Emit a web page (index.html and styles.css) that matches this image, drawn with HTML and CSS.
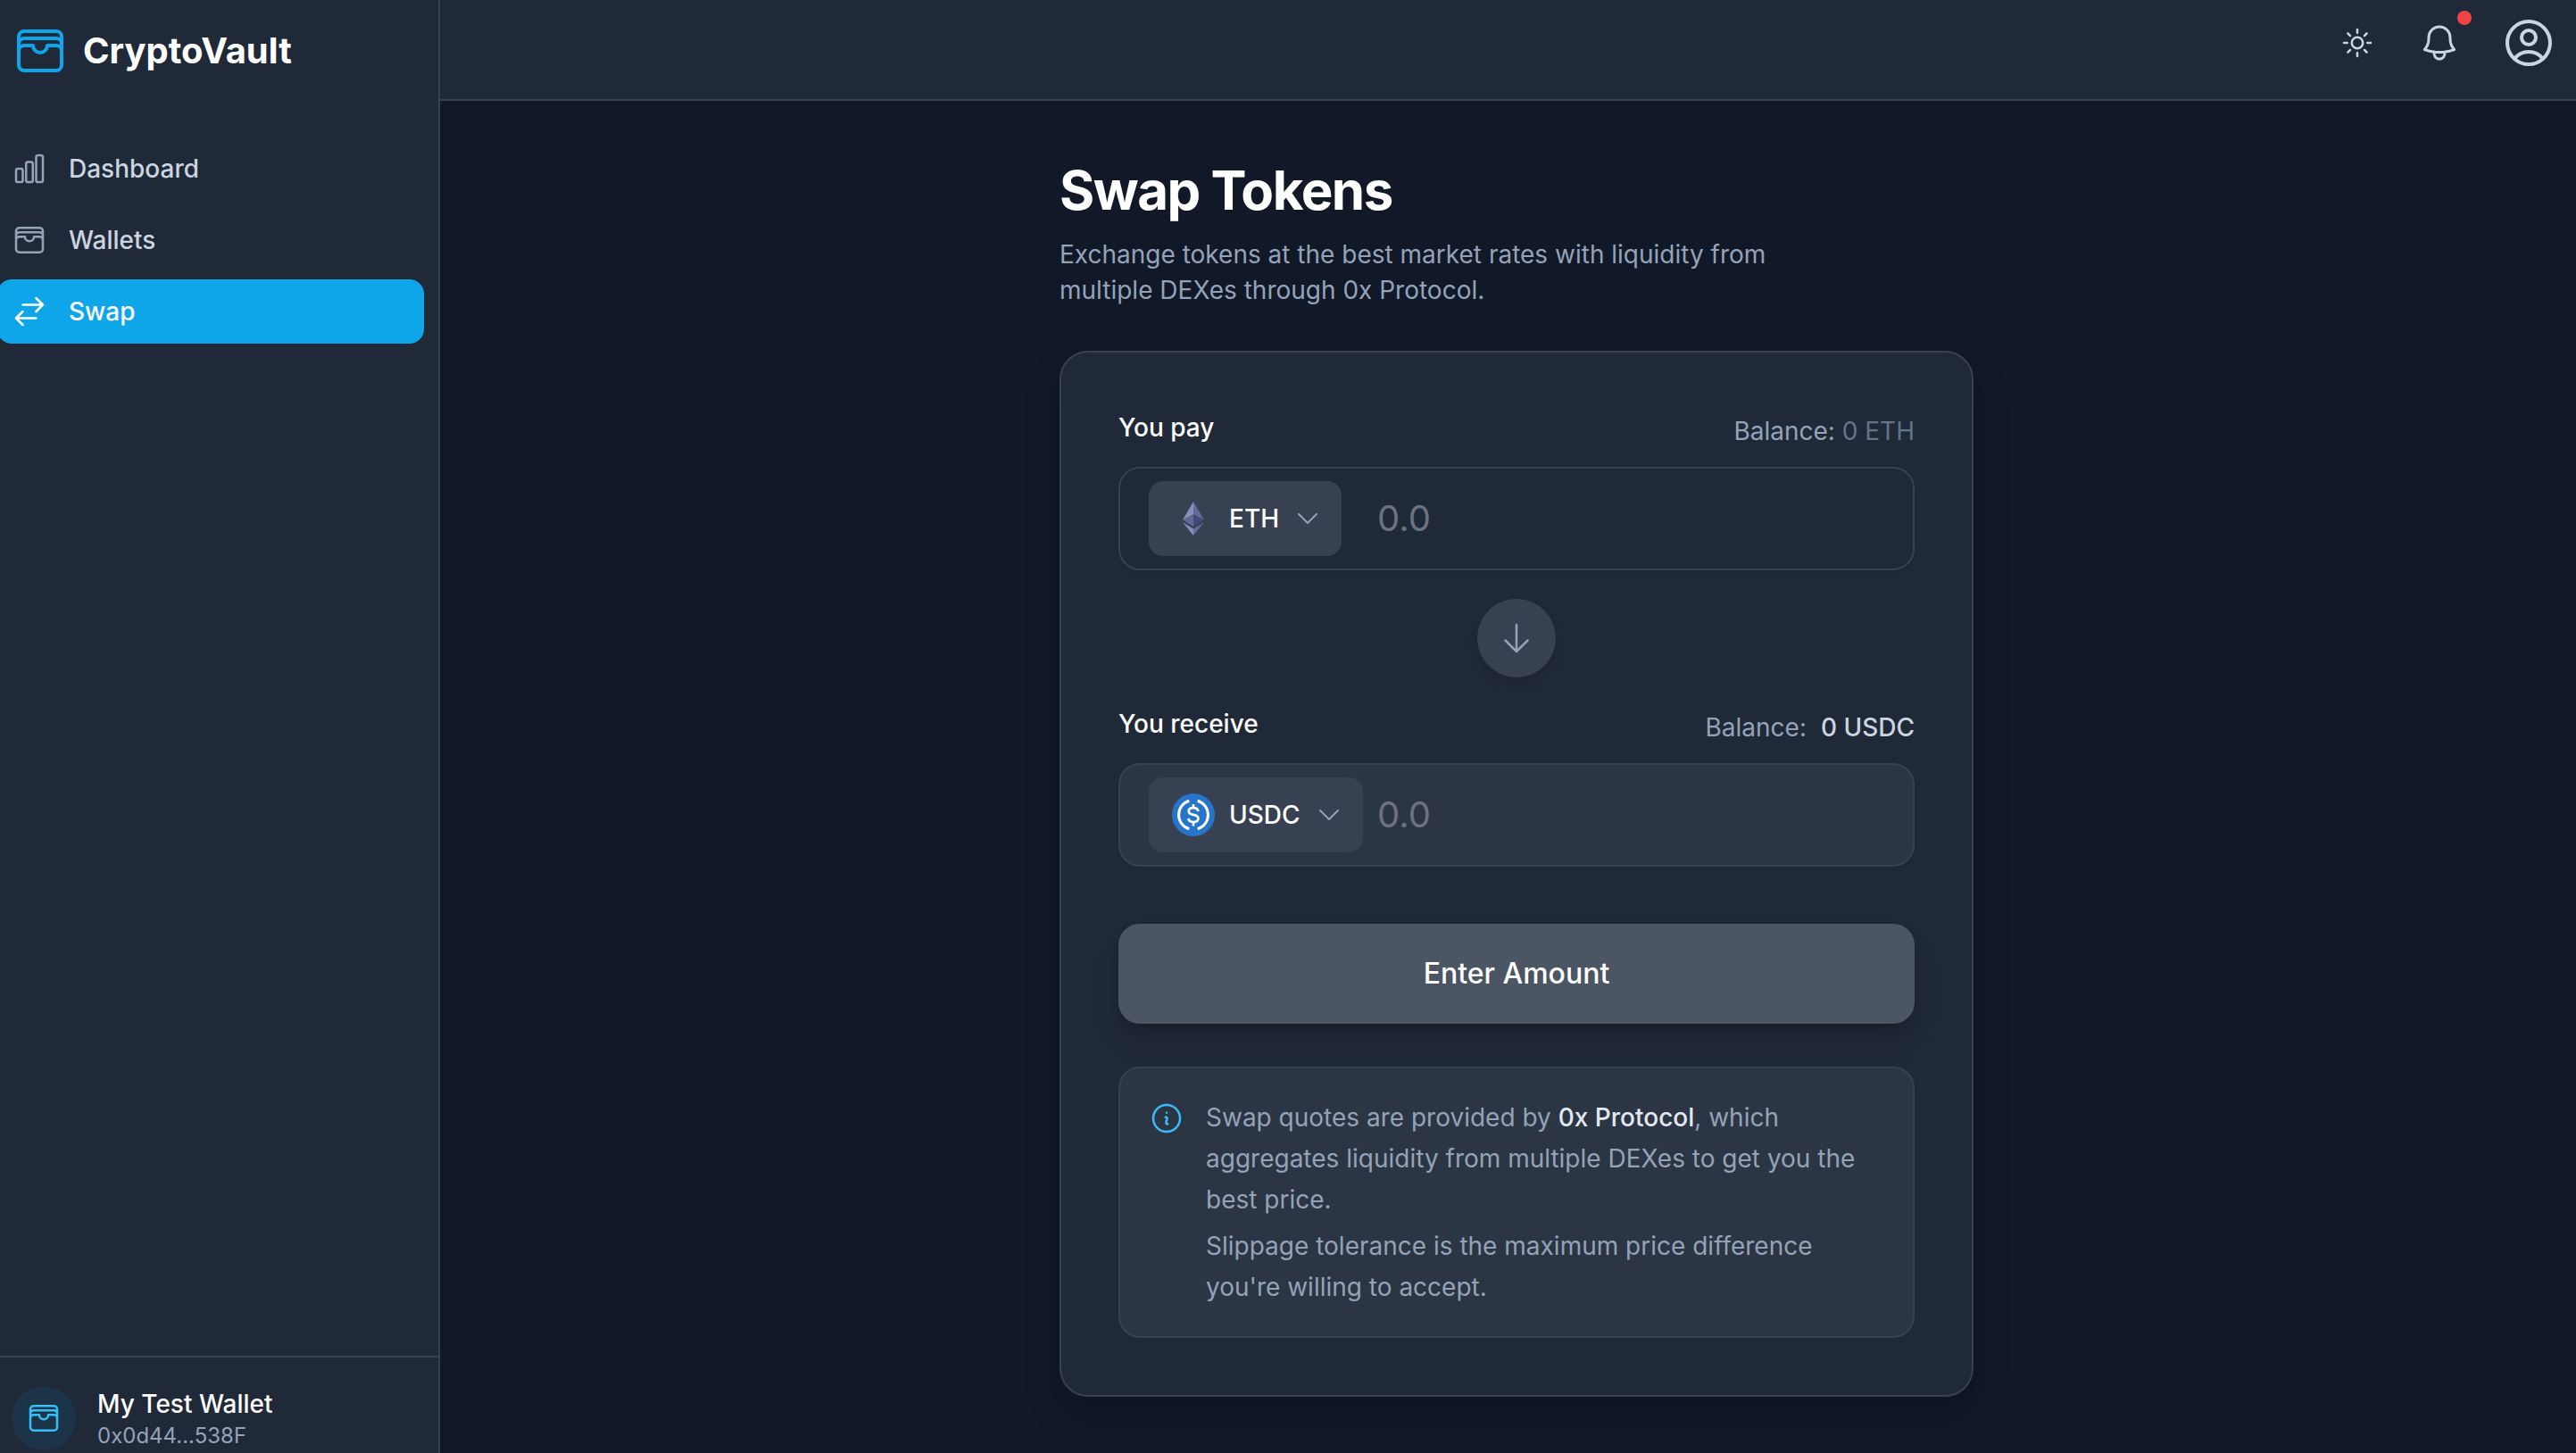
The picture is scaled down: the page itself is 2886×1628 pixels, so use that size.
FILE: index.html
```html
<!DOCTYPE html>
<html lang="en">
<head>
  <meta charset="utf-8">
  <meta name="viewport" content="width=device-width, initial-scale=1">
  <title>CryptoVault – Swap</title>
  <link rel="stylesheet" href="styles.css">
</head>
<body>
  <svg class="sprite" aria-hidden="true">
    <symbol id="wallet" viewBox="0 0 24 24"><path d="M21 12a2.25 2.25 0 0 0-2.25-2.25H15a3 3 0 1 1-6 0H5.25A2.25 2.25 0 0 0 3 12m18 0v6a2.25 2.25 0 0 1-2.25 2.25H5.25A2.25 2.25 0 0 1 3 18v-6m18 0V9M3 12V9m18 0a2.25 2.25 0 0 0-2.25-2.25H5.25A2.25 2.25 0 0 0 3 9m18 0V6a2.25 2.25 0 0 0-2.25-2.25H5.25A2.25 2.25 0 0 0 3 6v3"/></symbol>
    <symbol id="chevron-down" viewBox="0 0 24 24"><path d="m19.5 8.25-7.5 7.5-7.5-7.5"/></symbol>
  </svg>

  <div class="shell">
    <aside class="sidebar">
      <a class="brand" href="#">
        <svg class="icon icon-xl"><use href="#wallet"/></svg>
        <span>CryptoVault</span>
      </a>

      <nav class="nav">
        <a class="nav-item" href="#">
          <svg class="icon" viewBox="0 0 24 24"><path d="M3 13.125C3 12.504 3.504 12 4.125 12h2.25c.621 0 1.125.504 1.125 1.125v6.75C7.5 20.496 6.996 21 6.375 21h-2.25A1.125 1.125 0 0 1 3 19.875v-6.75ZM9.75 8.625c0-.621.504-1.125 1.125-1.125h2.25c.621 0 1.125.504 1.125 1.125v11.25c0 .621-.504 1.125-1.125 1.125h-2.25a1.125 1.125 0 0 1-1.125-1.125V8.625ZM16.5 4.125c0-.621.504-1.125 1.125-1.125h2.25C20.496 3 21 3.504 21 4.125v15.75c0 .621-.504 1.125-1.125 1.125h-2.25a1.125 1.125 0 0 1-1.125-1.125V4.125Z"/></svg>
          Dashboard
        </a>
        <a class="nav-item" href="#">
          <svg class="icon"><use href="#wallet"/></svg>
          Wallets
        </a>
        <a class="nav-item active" href="#" aria-current="page">
          <svg class="icon" viewBox="0 0 24 24"><path d="M7.5 21 3 16.5m0 0L7.5 12M3 16.5h13.5m0-13.5L21 7.5m0 0L16.5 12M21 7.5H7.5"/></svg>
          Swap
        </a>
      </nav>

      <div class="account">
        <span class="avatar"><svg class="icon"><use href="#wallet"/></svg></span>
        <div>
          <p class="account-name">My Test Wallet</p>
          <p class="account-address">0x0d44...538F</p>
        </div>
      </div>
    </aside>

    <div class="page">
      <header class="topbar">
        <button class="icon-button" type="button" aria-label="Toggle theme">
          <svg class="icon" viewBox="0 0 24 24"><path d="M12 3v2.25m6.364.386-1.591 1.591M21 12h-2.25m-.386 6.364-1.591-1.591M12 18.75V21m-4.773-4.227-1.591 1.591M5.25 12H3m4.227-4.773L5.636 5.636M15.75 12a3.75 3.75 0 1 1-7.5 0 3.75 3.75 0 0 1 7.5 0Z"/></svg>
        </button>
        <button class="icon-button" type="button" aria-label="Notifications">
          <svg class="icon icon-lg" viewBox="0 0 24 24"><path d="M14.857 17.082a23.848 23.848 0 0 0 5.454-1.31A8.967 8.967 0 0 1 18 9.75V9A6 6 0 0 0 6 9v.75a8.967 8.967 0 0 1-2.312 6.022c1.733.64 3.56 1.085 5.455 1.31m5.714 0a24.255 24.255 0 0 1-5.714 0m5.714 0a3 3 0 1 1-5.714 0"/></svg>
          <span class="badge"></span>
        </button>
        <button class="icon-button profile" type="button" aria-label="Profile">
          <svg class="icon icon-xl" viewBox="0 0 24 24"><path d="M17.982 18.725A7.488 7.488 0 0 0 12 15.75a7.488 7.488 0 0 0-5.982 2.975m11.963 0a9 9 0 1 0-11.963 0m11.963 0A8.966 8.966 0 0 1 12 21a8.966 8.966 0 0 1-5.982-2.275M15 9.75a3 3 0 1 1-6 0 3 3 0 0 1 6 0Z"/></svg>
        </button>
      </header>

      <main class="content">
        <h1>Swap Tokens</h1>
        <p class="lead">Exchange tokens at the best market rates with liquidity from multiple DEXes through 0x Protocol.</p>

        <form class="card">
          <section class="side">
            <div class="side-head">
              <label for="pay">You pay</label>
              <p class="balance">Balance: <span class="balance-muted">0 ETH</span></p>
            </div>
            <div class="field">
              <div class="token-slot">
                <button class="token" type="button">
                  <svg class="token-logo" viewBox="0 0 48 48">
                    <path fill="#8a91b7" d="M24 5 12 25.500l12-6z"/>
                    <path fill="#666a98" d="M24 5v14.500l12 6z"/>
                    <path fill="#62669a" d="m12 25.500 12-6V33z"/>
                    <path fill="#454a78" d="m36 25.500-12-6V33z"/>
                    <path fill="#8a91b7" d="m12 28.200 12 7.200V43z"/>
                    <path fill="#666a98" d="m36 28.200-12 7.200V43z"/>
                  </svg>
                  ETH
                  <svg class="icon icon-sm"><use href="#chevron-down"/></svg>
                </button>
              </div>
              <input id="pay" type="text" inputmode="decimal" placeholder="0.0">
            </div>
          </section>

          <button class="flip" type="button" aria-label="Switch tokens">
            <svg class="icon" viewBox="0 0 24 24"><path d="M19.5 13.500 12 21m0 0-7.500-7.500M12 21V3"/></svg>
          </button>

          <section class="side">
            <div class="side-head">
              <label for="receive">You receive</label>
              <p class="balance">Balance: <span class="balance-strong">0 USDC</span></p>
            </div>
            <div class="field field-readonly">
              <div class="token-slot">
                <button class="token" type="button">
                  <svg class="token-logo" viewBox="0 0 48 48">
                    <circle cx="24" cy="24" r="24" fill="#2775ca"/>
                    <g fill="none" stroke="#fff" stroke-width="3">
                      <path d="M19.300 8.200a16.500 16.500 0 0 0 0 31.600M28.700 8.200a16.500 16.500 0 0 1 0 31.600"/>
                      <path stroke-width="2.700" d="M29.400 20.200c-.3-2.600-2.200-4-5.400-4s-5.200 1.500-5.200 3.800c0 2.700 2.200 3.400 5.200 3.900s5.400 1.400 5.400 4.100-2.200 4-5.400 4-5.200-1.400-5.600-4M24 12v4.200M24 32v4.400"/>
                    </g>
                  </svg>
                  USDC
                  <svg class="icon icon-sm"><use href="#chevron-down"/></svg>
                </button>
              </div>
              <input id="receive" type="text" placeholder="0.0" readonly>
            </div>
          </section>

          <button class="submit" type="submit">Enter Amount</button>

          <div class="note">
            <svg class="icon" viewBox="0 0 24 24"><path d="m11.250 11.250.041-.02a.75.75 0 0 1 1.063.852l-.708 2.836a.75.75 0 0 0 1.063.853l.041-.021M21 12a9 9 0 1 1-18 0 9 9 0 0 1 18 0Zm-9-3.750h.008v.008H12V8.250Z"/></svg>
            <div class="note-text">
              <p>Swap quotes are provided by <strong>0x Protocol</strong>, which aggregates liquidity from multiple DEXes to get you the best price.</p>
              <p>Slippage tolerance is the maximum price difference you're willing to accept.</p>
            </div>
          </div>
        </form>
      </main>
    </div>
  </div>
</body>
</html>
```

FILE: styles.css
```css
:root {
  --bg: #111827;
  --surface: #202937;
  --surface-soft: #2c3543;
  --raised: #384151;
  --line: #374151;
  --accent: #0ea5e9;
  --accent-light: #38bdf8;
  --text: #ffffff;
  --text-soft: #cbd5e1;
  --text-muted: #94a3b8;
  --text-dim: #64748b;
}

* {
  box-sizing: border-box;
}

body {
  margin: 0;
  overflow: hidden;
  background: var(--bg);
  color: var(--text);
  font-family: Inter, "Liberation Sans", sans-serif;
  font-size: 28px;
  line-height: 40px;
}

h1,
p {
  margin: 0;
}

a {
  color: inherit;
  text-decoration: none;
}

button,
input {
  padding: 0;
  border: 0;
  background: none;
  color: inherit;
  font: inherit;
}

.sprite {
  position: absolute;
  width: 0;
  height: 0;
}

.icon {
  display: block;
  flex: none;
  width: 40px;
  height: 40px;
  fill: none;
  stroke: currentColor;
  stroke-width: 1.5;
  stroke-linecap: round;
  stroke-linejoin: round;
}

.icon-sm {
  width: 32px;
  height: 32px;
}

.icon-lg {
  width: 48px;
  height: 48px;
}

.icon-xl {
  width: 64px;
  height: 64px;
}

/* The shell bleeds past both window edges */
.shell {
  display: flex;
  min-height: 100vh;
  margin: 0 -19px;
}

.sidebar {
  display: flex;
  flex: none;
  flex-direction: column;
  width: 512px;
  height: 100vh;
  border-right: 2px solid var(--line);
  background: var(--surface);
}

.brand {
  display: flex;
  align-items: center;
  gap: 16px;
  padding: 25px 32px 64px;
  font-size: 40px;
  font-weight: 700;
}

.brand .icon {
  color: var(--accent);
}

.nav {
  display: flex;
  flex: 1;
  flex-direction: column;
  gap: 8px;
  padding: 0 16px;
}

.nav-item {
  display: flex;
  align-items: center;
  gap: 24px;
  padding: 16px;
  border-radius: 16px;
  color: var(--text-soft);
  font-weight: 500;
}

.nav-item .icon {
  color: var(--text-muted);
}

.nav-item.active,
.nav-item.active .icon {
  color: var(--text);
}

.nav-item.active {
  background: var(--accent);
}

.account {
  display: flex;
  align-items: center;
  gap: 24px;
  padding: 32px 32px 3px;
  border-top: 2px solid var(--line);
}

.avatar {
  display: grid;
  place-items: center;
  width: 72px;
  height: 72px;
  border-radius: 50%;
  background: #1b3448;
  color: var(--accent-light);
}

.account-name {
  font-weight: 500;
}

.account-address {
  color: var(--text-muted);
  font-size: 24px;
  line-height: 32px;
}

.page {
  flex: 1;
  min-width: 0;
}

.topbar {
  display: flex;
  align-items: center;
  justify-content: flex-end;
  gap: 24px;
  padding: 8px 32px 23px;
  border-bottom: 2px solid var(--line);
  background: var(--surface);
}

.icon-button {
  position: relative;
  padding: 12px;
  color: var(--text-soft);
}

.profile {
  padding: 8px;
}

.badge {
  position: absolute;
  top: 0;
  right: 0;
  width: 16px;
  height: 16px;
  border-radius: 50%;
  background: #ef4444;
}

.content {
  max-width: 1024px;
  margin: 0 auto;
  padding: 64px 0;
}

h1 {
  font-size: 60px;
  font-weight: 700;
  line-height: 72px;
  letter-spacing: -0.025em;
}

.lead {
  max-width: 832px;
  margin: 16px 0 48px;
  color: var(--text-muted);
}

.card {
  padding: 64px;
  border: 2px solid var(--line);
  border-radius: 32px;
  background: var(--surface);
  box-shadow: 0 20px 40px rgba(0, 0, 0, 0.18);
}

.side {
  display: flex;
  flex-direction: column;
  gap: 16px;
}

.side-head {
  display: flex;
  justify-content: space-between;
}

.side-head label {
  font-weight: 500;
}

.balance {
  padding: 4px 0;
  color: var(--text-muted);
}

.balance-muted {
  color: var(--text-dim);
}

.balance-strong {
  margin-left: 8px;
  color: var(--text-soft);
  font-weight: 500;
}

.field {
  display: flex;
  align-items: center;
  padding: 14px 32px;
  border: 2px solid var(--line);
  border-radius: 24px;
  box-shadow: 0 2px 4px rgba(0, 0, 0, 0.05);
}

.field-readonly {
  background: var(--surface-soft);
}

.token-slot {
  flex: none;
  width: 256px;
}

.token {
  display: flex;
  align-items: center;
  gap: 16px;
  padding: 18px 22px 18px 26px;
  border-radius: 16px;
  background: var(--raised);
  font-weight: 500;
}

.token .icon {
  color: var(--text-muted);
}

.token-logo {
  display: block;
  width: 48px;
  height: 48px;
}

.field input {
  flex: 1;
  min-width: 0;
  outline: 0;
  font-size: 40px;
  line-height: 56px;
}

.field input::placeholder {
  color: #6b7280;
  opacity: 1;
}

.flip {
  display: grid;
  place-items: center;
  width: 88px;
  height: 88px;
  margin: 32px auto;
  border-radius: 50%;
  background: var(--raised);
  color: var(--text-muted);
  box-shadow: 0 8px 12px rgba(0, 0, 0, 0.1);
}

.submit {
  display: block;
  width: 100%;
  margin: 64px 0 48px;
  padding: 32px;
  border-radius: 24px;
  background: #4b5563;
  font-size: 32px;
  font-weight: 500;
  line-height: 48px;
  box-shadow: 0 20px 30px rgba(0, 0, 0, 0.1), 0 8px 12px rgba(0, 0, 0, 0.1);
}

.note {
  display: flex;
  gap: 24px;
  padding: 32px;
  border: 2px solid var(--line);
  border-radius: 24px;
  background: var(--surface-soft);
  color: var(--text-muted);
  line-height: 46px;
}

.note .icon {
  margin-top: 4px;
  color: var(--accent-light);
}

.note-text {
  display: flex;
  flex-direction: column;
  gap: 6px;
}

.note strong {
  color: #e2e8f0;
  font-weight: 500;
}
```
